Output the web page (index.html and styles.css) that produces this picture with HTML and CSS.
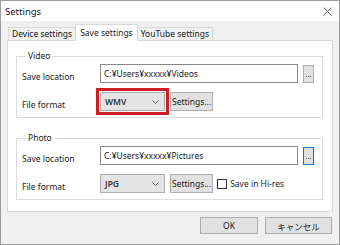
FILE: index.html
```html
<!DOCTYPE html>
<html lang="ja">
<head>
    <meta charset="UTF-8">
    <title>Settings</title>
    <link rel="stylesheet" href="styles.css">
</head>
<body>
    <div class="window">
        <div class="titlebar">
            <span class="title">Settings</span>
            <svg class="close" width="9" height="9" viewBox="0 0 9 9">
                <path d="M0.5 0.5 L8.5 8.5 M8.5 0.5 L0.5 8.5" stroke="#555" stroke-width="0.9" fill="none"/>
            </svg>
        </div>

        <div class="dialog-body">
            <div class="tabs">
                <div class="tab">Device settings</div>
                <div class="tab active">Save settings</div>
                <div class="tab">YouTube settings</div>
            </div>

            <div class="panel">
                <fieldset class="group">
                    <legend>Video</legend>
                    <div class="row">
                        <span class="label">Save location</span>
                        <div class="textbox">C:¥Users¥xxxxx¥Videos</div>
                        <button class="browse">...</button>
                    </div>
                    <div class="row">
                        <span class="label">File format</span>
                        <div class="combo marked">
                            <span>WMV</span>
                            <svg width="7" height="4" viewBox="0 0 7 4"><path d="M0.5 0.5 L3.5 3.5 L6.5 0.5" stroke="#666" fill="none"/></svg>
                        </div>
                        <button class="btn">Settings...</button>
                    </div>
                </fieldset>

                <fieldset class="group">
                    <legend>Photo</legend>
                    <div class="row">
                        <span class="label">Save location</span>
                        <div class="textbox">C:¥Users¥xxxxx¥Pictures</div>
                        <button class="browse focused">...</button>
                    </div>
                    <div class="row">
                        <span class="label">File format</span>
                        <div class="combo">
                            <span>JPG</span>
                            <svg width="7" height="4" viewBox="0 0 7 4"><path d="M0.5 0.5 L3.5 3.5 L6.5 0.5" stroke="#666" fill="none"/></svg>
                        </div>
                        <button class="btn">Settings...</button>
                        <label class="check"><span class="box"></span>Save in Hi-res</label>
                    </div>
                </fieldset>
            </div>

            <div class="footer">
                <button class="btn wide">OK</button>
                <button class="btn wide">キャンセル</button>
            </div>
        </div>
    </div>
</body>
</html>
```

FILE: styles.css
```css
* {
    margin: 0;
    padding: 0;
    box-sizing: border-box;
}

body {
    font-family: "Noto Sans", "Noto Sans CJK JP", sans-serif;
    font-size: 8.5px;
    color: #1a1a1a;
    background: #ffffff;
}

.window {
    width: 340px;
    height: 245px;
    border: 1px solid #9c9c9c;
    background: #f0f0f0;
    display: flex;
    flex-direction: column;
}

.titlebar {
    height: 20px;
    background: #ffffff;
    display: flex;
    align-items: center;
    justify-content: space-between;
    padding: 0 7px 0 4px;
    font-size: 9.5px;
}

.dialog-body {
    flex: 1;
    padding: 3px 6px 0 6px;
}

/* tabs */
.tabs {
    display: flex;
    align-items: flex-end;
    height: 16px;
    padding-left: 1px;
}

.tab {
    height: 13px;
    line-height: 12px;
    padding: 0 3px;
    border: 1px solid #d9d9d9;
    border-bottom: none;
    background: #f0f0f0;
    white-space: nowrap;
}

.tab.active {
    height: 17px;
    line-height: 15px;
    margin: 0 -1px -1px -1px;
    padding: 0 4px;
    background: #ffffff;
    position: relative;
    z-index: 1;
}

.panel {
    height: 172px;
    border: 1px solid #d9d9d9;
    background: #ffffff;
    padding: 10px 9px 0 8px;
    display: flex;
    flex-direction: column;
    gap: 15px;
}

.group {
    border: 1px solid #dcdcdc;
    padding: 3px 0 6px 5px;
    display: flex;
    flex-direction: column;
    gap: 9px;
}

.group legend {
    padding: 0 2px;
    margin-left: 4px;
    line-height: 10px;
}

.row {
    display: flex;
    align-items: center;
    height: 19px;
}

.label {
    width: 78px;
    padding-top: 6px;
}

.textbox {
    width: 198px;
    height: 19px;
    border: 1px solid #8a8a8a;
    padding: 0 3px;
    line-height: 17px;
    white-space: nowrap;
}

.browse {
    margin-left: 5px;
    width: 11px;
    height: 18px;
    border: 1px solid #adadad;
    background: #e1e1e1;
    font: inherit;
    font-size: 8px;
    line-height: 14px;
    color: #333;
}

.browse.focused {
    border-color: #0078d7;
}

.combo {
    width: 65px;
    height: 19px;
    border: 1px solid #adadad;
    background: #e5e5e5;
    display: flex;
    align-items: center;
    justify-content: space-between;
    padding: 0 5px 0 4px;
    font-weight: 600;
    color: #333;
}

.combo.marked {
    outline: 3px solid #cc1f24;
    outline-offset: 1px;
}

.btn {
    margin-left: 5px;
    height: 19px;
    padding: 0 1px;
    border: 1px solid #adadad;
    background: #e1e1e1;
    font: inherit;
    color: #1a1a1a;
}

.check {
    display: flex;
    align-items: center;
    margin-left: 4px;
}

.check .box {
    width: 10px;
    height: 10px;
    border: 1px solid #333;
    background: #ffffff;
    margin-right: 3px;
}

.footer {
    display: flex;
    justify-content: flex-end;
    gap: 7px;
    padding: 5px 1px 0 0;
}

.btn.wide {
    width: 58px;
    height: 17px;
    margin-left: 0;
}

.footer .btn.wide:last-child {
    width: 67px;
}
```
